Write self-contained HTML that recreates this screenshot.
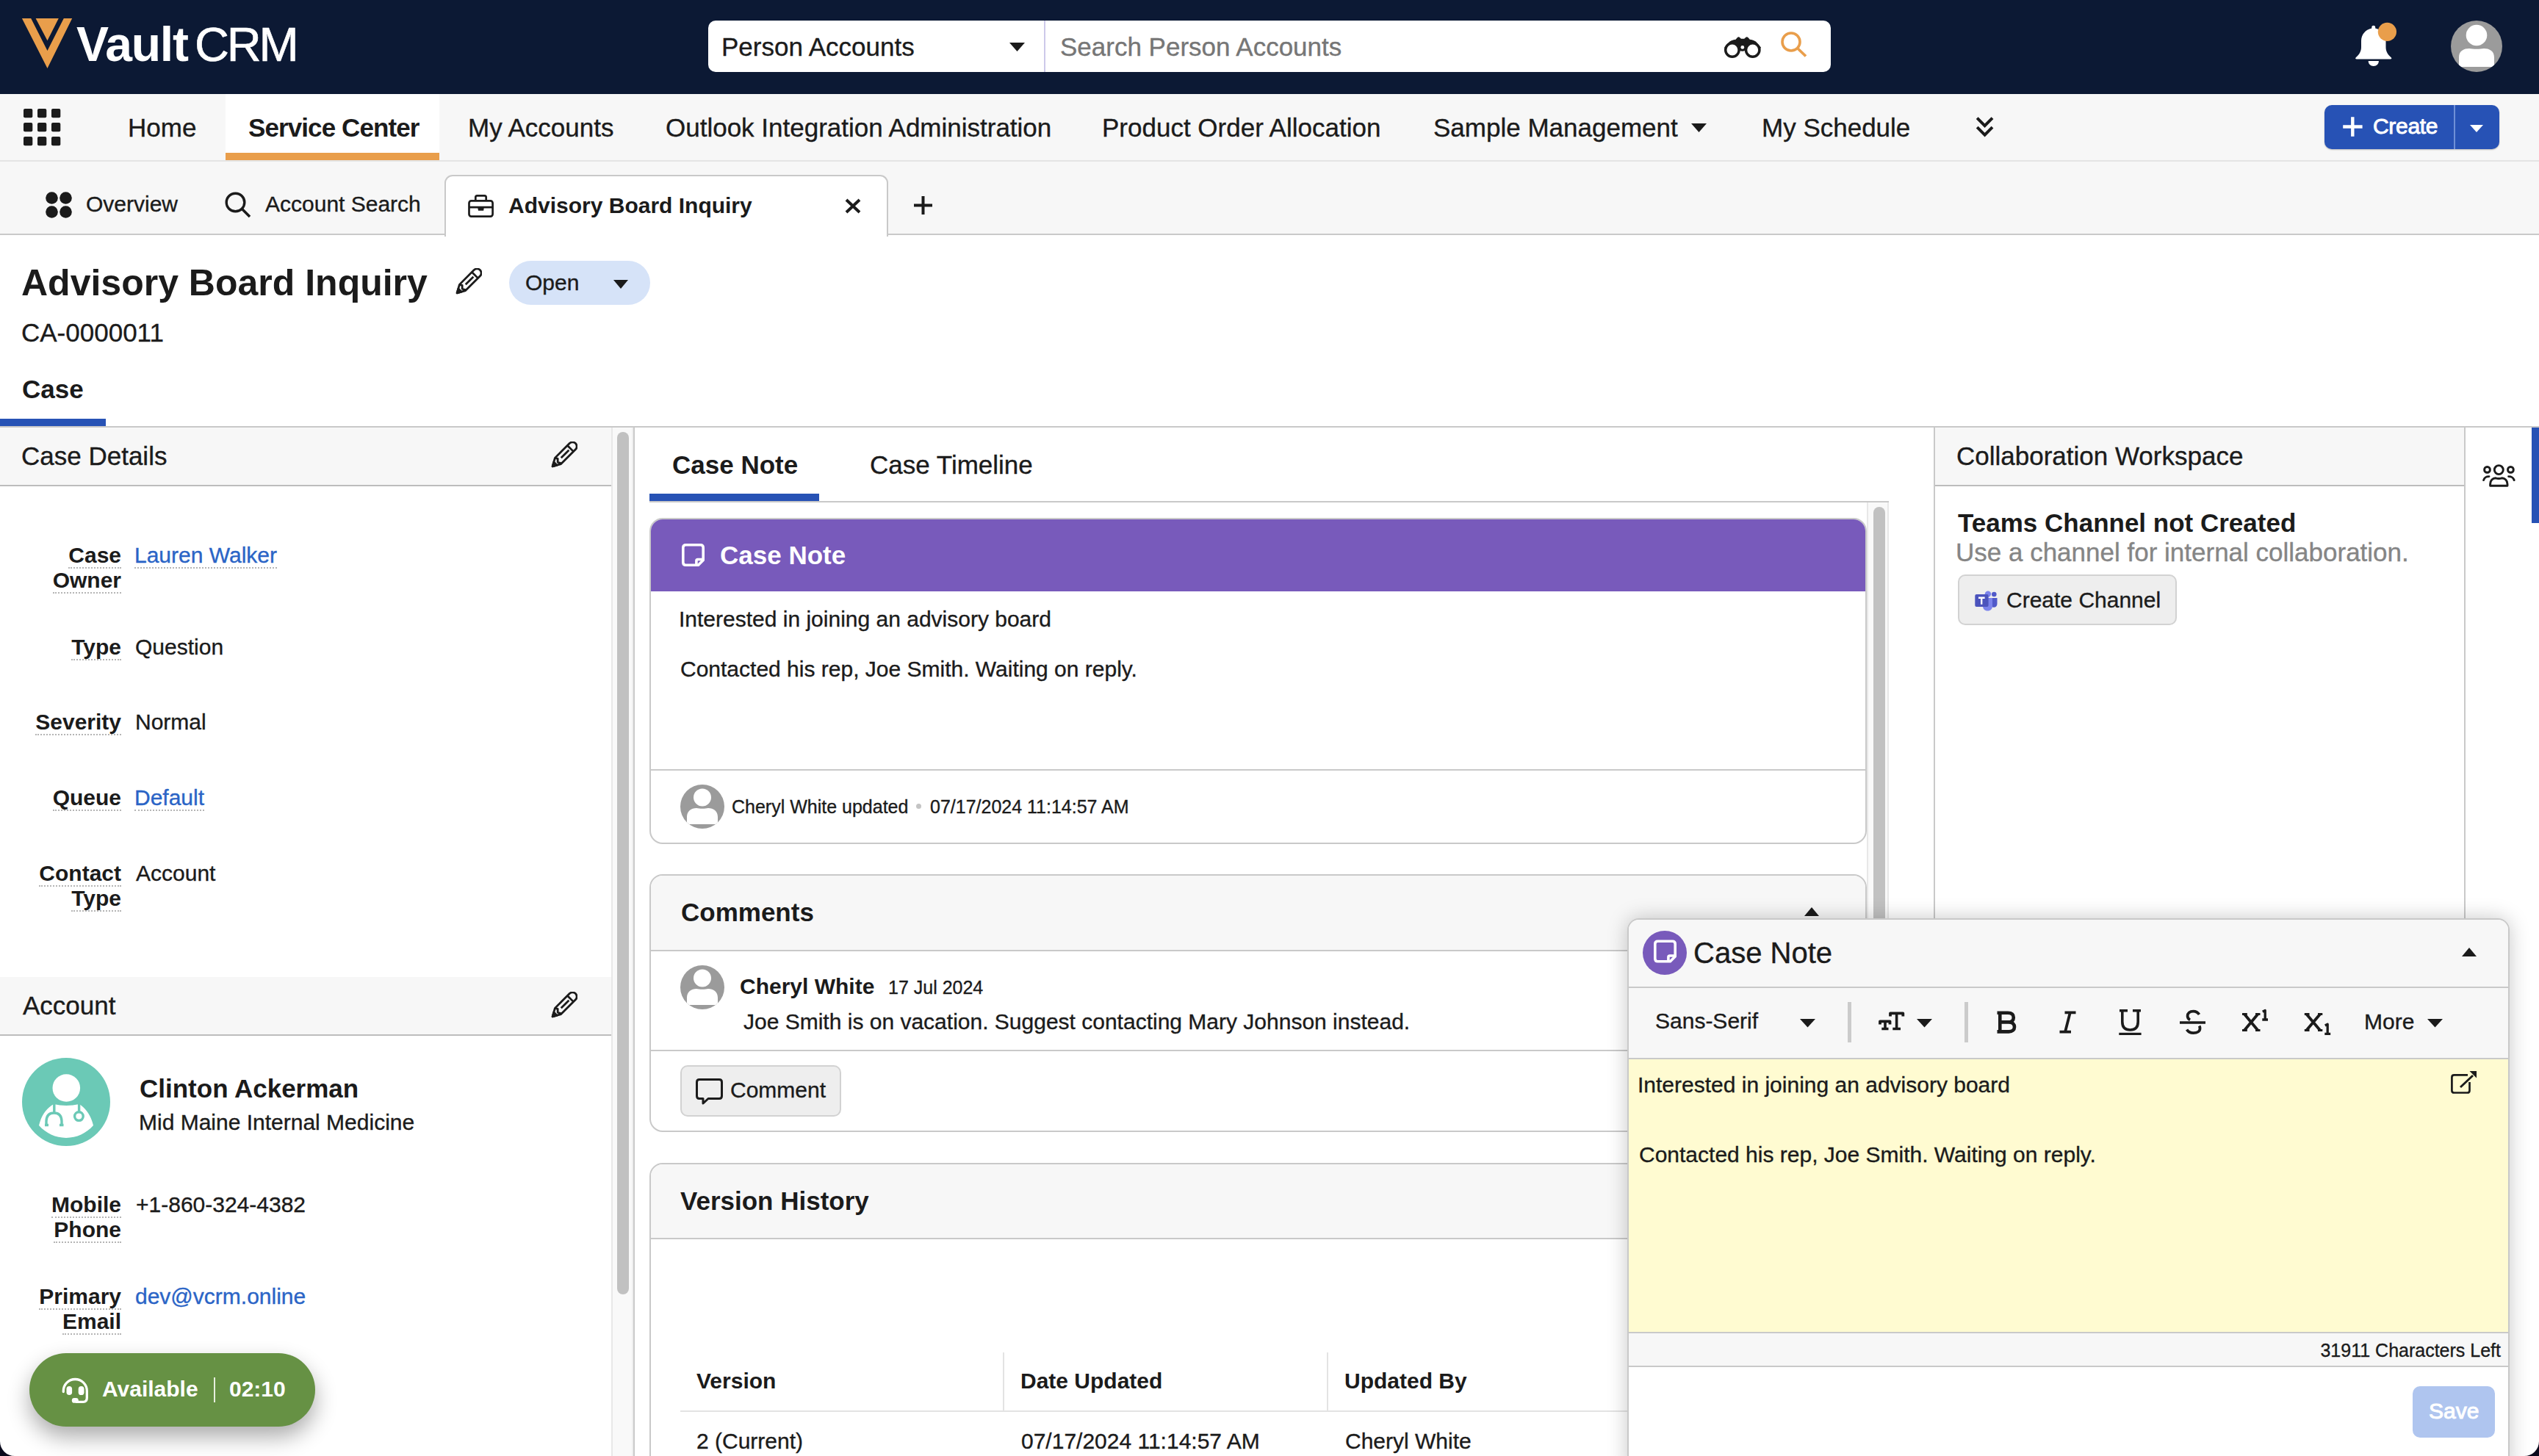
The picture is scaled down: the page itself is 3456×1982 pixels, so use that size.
<!DOCTYPE html>
<html><head><meta charset="utf-8">
<style>
html,body{margin:0;padding:0;}
body{width:3456px;height:1982px;position:relative;overflow:hidden;background:#fff;font-family:"Liberation Sans",sans-serif;color:#1b1b1b;}
.a{position:absolute;}
.t{position:absolute;white-space:nowrap;line-height:1;-webkit-text-stroke:0.35px currentColor;}
.f25{font-size:25px}.f30{font-size:30px}.f35{font-size:35px}.f40{font-size:40px}.f50{font-size:50px}
.b{font-weight:700}
.t.b,.t.lbl{-webkit-text-stroke:0}
.lnk{color:#2a64c6}
.lbl{font-weight:700;font-size:30px;text-align:right;right:auto;}
.dot{border-bottom:2px dotted #b5b5b5;}
svg{position:absolute;overflow:visible}
</style></head><body>

<svg width="0" height="0" style="position:absolute"><defs>
<symbol id="pen" viewBox="0 0 36 36"><g transform="translate(18,18) rotate(-45)" fill="none" stroke="#1b1b1b" stroke-width="2.8" stroke-linejoin="round"><path d="M-12 -5.8 L16 -5.8 A5.8 5.8 0 0 1 16 5.8 L-12 5.8 L-22.5 0 Z"/><path d="M12 -5.8 V5.8"/><path d="M-6 0 H9"/><path d="M-12 -5.8 L-10 -2.5 L-13.5 1 L-11 5.8"/><path d="M-22.5 0 L-17 -3 L-17 3 Z" fill="#1b1b1b"/></g></symbol>
<symbol id="person" viewBox="0 0 60 60"><clipPath id="pclip"><circle cx="30" cy="30" r="30"/></clipPath><circle cx="30" cy="30" r="30" fill="#9b9b9b"/><g clip-path="url(#pclip)"><circle cx="30" cy="17.5" r="12" fill="#fff"/><path d="M9 54 V44 C9 36 15 32 22 32 C26 33 34 33 38 32 C45 32 51 36 51 44 V54 Z" fill="#fff"/></g></symbol>
</defs></svg>
<!-- ============ HEADER ============ -->
<div class="a" style="left:0;top:0;width:3456px;height:128px;background:#0c1934"></div>
<svg style="left:0;top:0" width="120" height="128"><polygon fill="#e99e4b" points="29.9,24.9 42.2,24.9 64.5,69 86.8,24.9 98.2,24.9 64.5,92.9"/><polygon fill="#e99e4b" points="48.6,24.9 79.8,24.9 64.5,55.3"/></svg>
<div class="t b" style="left:104px;top:27px;font-size:66px;color:#fff;letter-spacing:-1.2px">Vault</div>
<div class="t" style="left:265px;top:28px;font-size:65px;color:#fff;letter-spacing:-3.2px;-webkit-text-stroke:0.6px #fff">CRM</div>

<div class="a" style="left:964px;top:28px;width:1528px;height:70px;background:#fff;border-radius:10px"></div>
<div class="a" style="left:1421px;top:28px;width:2px;height:70px;background:#cdc9ea"></div>
<div class="t f35" style="left:982px;top:46px;color:#1b1b1b">Person Accounts</div>
<svg style="left:1374px;top:58px" width="22" height="13"><polygon points="0,0 21,0 10.5,12" fill="#1b1b1b"/></svg>
<div class="t f35" style="left:1443px;top:46px;color:#767676">Search Person Accounts</div>
<!-- binoculars -->
<svg style="left:2340px;top:40px" width="65" height="45" viewBox="0 0 65 45"><path d="M7.8 25 L14.8 17 C17 15.2 20 14.4 23.2 14 L25.4 11.5 Q26.5 10.3 27.7 11.5 L29.8 13.4 H34.3 L36.5 11.5 Q37.7 10.3 38.9 11.5 L41.2 14 C44.4 14.4 47.3 15.2 49.5 17 L56.4 25 Z" fill="#1b1b1b" stroke="#1b1b1b" stroke-width="1.2" stroke-linejoin="round"/><path d="M27.6 13 H35.6 V28.5 Q31.6 31 27.6 28.5 Z" fill="#1b1b1b"/><circle cx="17.9" cy="28" r="9.2" fill="#fff" stroke="#1b1b1b" stroke-width="3.5"/><circle cx="45.7" cy="28" r="9.2" fill="#fff" stroke="#1b1b1b" stroke-width="3.5"/><circle cx="31.8" cy="24.4" r="2.4" fill="#fff"/></svg>
<!-- orange search -->
<svg style="left:2424px;top:43px" width="36" height="35" viewBox="0 0 36 35"><circle cx="14" cy="14" r="12" fill="none" stroke="#e99e4b" stroke-width="3.6"/><line x1="22.5" y1="22.5" x2="34" y2="33.5" stroke="#e99e4b" stroke-width="3.8"/></svg>
<!-- bell -->
<svg style="left:3204px;top:33px" width="60" height="60" viewBox="0 0 60 60"><path d="M24.3 4 C24.3 1 29.2 1 29.2 4 V5.5 C38 7.5 43.5 14 43.5 23 V31 C43.5 37 46 41 50.5 45 C52 46.5 51.5 47.5 49.5 47.5 H4 C2 47.5 1.5 46.5 3 45 C7.5 41 10 37 10 31 V23 C10 14 15.5 7.5 24.3 5.5 Z" fill="#fff"/><path d="M19.7 50 H33.9 C33.9 54 31 57 26.8 57 C22.6 57 19.7 54 19.7 50 Z" fill="#fff"/><circle cx="45.4" cy="10.3" r="12.6" fill="#e99e4b"/></svg>
<!-- avatar -->
<svg style="left:3336px;top:28px" width="70" height="70" viewBox="0 0 70 70"><defs><clipPath id="avc"><circle cx="35" cy="35" r="35"/></clipPath></defs><circle cx="35" cy="35" r="35" fill="#9b9b9b"/><g clip-path="url(#avc)"><circle cx="35" cy="20" r="14.3" fill="#fff"/><path d="M11 63 L11 50 C11 41 18 38 25 38 C30 39 40 39 45 38 C52 38 59 41 59 50 L59 63Z" fill="#fff"/></g></svg>

<!-- ============ NAV ============ -->
<div class="a" style="left:0;top:128px;width:3456px;height:90px;background:#f7f7f7"></div>
<div class="a" style="left:0;top:218px;width:3456px;height:2px;background:#e4e4e4"></div>
<svg style="left:32px;top:148px" width="51" height="51" viewBox="0 0 51 51"><g fill="#1b1b1b"><rect x="0" y="0" width="12.3" height="12.3" rx="2"/><rect x="19" y="0" width="12.3" height="12.3" rx="2"/><rect x="38" y="0" width="12.3" height="12.3" rx="2"/><rect x="0" y="19" width="12.3" height="12.3" rx="2"/><rect x="19" y="19" width="12.3" height="12.3" rx="2"/><rect x="38" y="19" width="12.3" height="12.3" rx="2"/><rect x="0" y="38" width="12.3" height="12.3" rx="2"/><rect x="19" y="38" width="12.3" height="12.3" rx="2"/><rect x="38" y="38" width="12.3" height="12.3" rx="2"/></g></svg>
<div class="t f35" style="left:174px;top:156px">Home</div>
<div class="a" style="left:307px;top:128px;width:291px;height:90px;background:#fff"></div>
<div class="a" style="left:307px;top:208px;width:291px;height:10px;background:#e99e4b"></div>
<div class="t f35 b" style="left:338px;top:156px;letter-spacing:-0.9px">Service Center</div>
<div class="t f35" style="left:637px;top:156px">My Accounts</div>
<div class="t f35" style="left:906px;top:156px">Outlook Integration Administration</div>
<div class="t f35" style="left:1500px;top:156px">Product Order Allocation</div>
<div class="t f35" style="left:1951px;top:156px">Sample Management</div>
<svg style="left:2302px;top:168px" width="22" height="13"><polygon points="0,0 21,0 10.5,12" fill="#1b1b1b"/></svg>
<div class="t f35" style="left:2398px;top:156px">My Schedule</div>
<svg style="left:2689px;top:159px" width="26" height="28" viewBox="0 0 26 28"><path d="M2.2 1.6 L12.6 12.1 L23 1.6 M2.2 14.2 L12.6 24.7 L23 14.2" fill="none" stroke="#1b1b1b" stroke-width="4" stroke-linecap="butt" stroke-linejoin="miter"/></svg>
<div class="a" style="left:3164px;top:143px;width:238px;height:60px;background:#2752b5;border-radius:10px;box-shadow:0 1px 2px rgba(0,0,0,.25)"></div>
<div class="a" style="left:3340px;top:143px;width:2px;height:60px;background:#6f8fd6"></div>
<svg style="left:3189px;top:159px" width="27" height="27" viewBox="0 0 27 27"><path d="M13.3 0.3 V26.7 M0.2 13.5 H26.6" stroke="#fff" stroke-width="4.4" stroke-linecap="butt"/></svg>
<div class="t f30" style="left:3230px;top:157px;color:#fff;letter-spacing:-0.3px;-webkit-text-stroke:0.9px #fff">Create</div>
<svg style="left:3362px;top:170px" width="19" height="11"><polygon points="0,0 18,0 9,10" fill="#fff"/></svg>

<!-- ============ TAB BAR ============ -->
<div class="a" style="left:0;top:220px;width:3456px;height:98px;background:#f7f7f7"></div>
<div class="a" style="left:0;top:318px;width:3456px;height:2px;background:#c9c9c9"></div>
<svg style="left:62px;top:261px" width="36" height="36" viewBox="0 0 36 36"><g fill="#1b1b1b"><circle cx="8.5" cy="8.5" r="8.3"/><circle cx="27.5" cy="8.5" r="8.3"/><circle cx="8.5" cy="27.5" r="8.3"/><circle cx="27.5" cy="27.5" r="8.3"/></g></svg>
<div class="t f30" style="left:117px;top:263px">Overview</div>
<svg style="left:306px;top:261px" width="36" height="36" viewBox="0 0 36 36"><circle cx="14.5" cy="14.5" r="12.3" fill="none" stroke="#1b1b1b" stroke-width="3.4"/><line x1="23.5" y1="23.5" x2="34" y2="34" stroke="#1b1b1b" stroke-width="3.6"/></svg>
<div class="t f30" style="left:361px;top:263px">Account Search</div>
<div class="a" style="left:605px;top:238px;width:600px;height:82px;background:#fff;border:2px solid #c9c9c9;border-bottom:none;border-radius:11px 11px 0 0"></div>
<svg style="left:625px;top:255px" width="60" height="50" viewBox="0 0 60 50"><g fill="none" stroke="#1b1b1b" stroke-width="2.7"><rect x="13.5" y="18.4" width="32.1" height="21.2" rx="3"/><path d="M22.3 18.4 V13.6 Q22.3 11.4 24.5 11.4 H34.5 Q36.7 11.4 36.7 13.6 V18.4"/><path d="M13.5 27.1 H45.6"/></g><path d="M25 26 H34 L33.2 31.7 H26 Z" fill="#1b1b1b"/></svg>
<div class="t f30 b" style="left:692px;top:265px">Advisory Board Inquiry</div>
<svg style="left:1150px;top:270px" width="22" height="21" viewBox="0 0 22 21"><path d="M2 2 L20 19 M20 2 L2 19" stroke="#1b1b1b" stroke-width="4"/></svg>
<svg style="left:1243px;top:266px" width="27" height="27" viewBox="0 0 27 27"><path d="M13.5 1 V26 M1 13.5 H26" stroke="#1b1b1b" stroke-width="4"/></svg>

<!-- ============ PAGE HEADER ============ -->
<div class="t f50 b" style="left:29px;top:360px">Advisory Board Inquiry</div>
<svg style="left:620px;top:365px" width="36" height="36" viewBox="0 0 36 36"><use href="#pen"/></svg>
<div class="a" style="left:693px;top:355px;width:192px;height:60px;background:#d6e3f8;border-radius:30px"></div>
<div class="t f30" style="left:715px;top:370px">Open</div>
<svg style="left:835px;top:381px" width="21" height="13"><polygon points="0,0 20,0 10,12" fill="#1b1b1b"/></svg>
<div class="t f35" style="left:29px;top:435px">CA-0000011</div>
<div class="t f35 b" style="left:30px;top:512px">Case</div>
<div class="a" style="left:0;top:570px;width:144px;height:10px;background:#2752b5"></div>
<div class="a" style="left:0;top:580px;width:3456px;height:2px;background:#c9c9c9"></div>

<!-- ============ LEFT PANEL ============ -->
<div class="a" style="left:0;top:582px;width:832px;height:78px;background:#f7f7f7"></div>
<div class="a" style="left:0;top:660px;width:832px;height:2px;background:#bdbdbd"></div>
<div class="a" style="left:832px;top:582px;width:2px;height:1400px;background:#e8e8e8"></div>
<div class="a" style="left:834px;top:582px;width:26px;height:1400px;background:#f9f9f9"></div>
<div class="a" style="left:860px;top:582px;width:2px;height:1400px;background:#efefef"></div>
<div class="a" style="left:862px;top:582px;width:2px;height:1400px;background:#c9c9c9"></div>
<div class="a" style="left:840px;top:588px;width:16px;height:1174px;background:#c1c1c1;border-radius:8px"></div>
<div class="t f35" style="left:29px;top:603px">Case Details</div>
<svg style="left:750px;top:601px" width="36" height="36" viewBox="0 0 36 36"><use href="#pen"/></svg>

<div class="t lbl" style="right:3291px;top:741px"><span class="dot">Case</span></div>
<div class="t lbl" style="right:3291px;top:775px"><span class="dot">Owner</span></div>
<div class="t f30 lnk" style="left:183px;top:741px"><span class="dot">Lauren Walker</span></div>
<div class="t lbl" style="right:3291px;top:866px"><span class="dot">Type</span></div>
<div class="t f30" style="left:184px;top:866px">Question</div>
<div class="t lbl" style="right:3291px;top:968px"><span class="dot">Severity</span></div>
<div class="t f30" style="left:184px;top:968px">Normal</div>
<div class="t lbl" style="right:3291px;top:1071px"><span class="dot">Queue</span></div>
<div class="t f30 lnk" style="left:183px;top:1071px"><span class="dot">Default</span></div>
<div class="t lbl" style="right:3291px;top:1174px"><span class="dot">Contact</span></div>
<div class="t lbl" style="right:3291px;top:1208px"><span class="dot">Type</span></div>
<div class="t f30" style="left:185px;top:1174px">Account</div>

<div class="a" style="left:0;top:1330px;width:832px;height:78px;background:#f7f7f7"></div>
<div class="a" style="left:0;top:1408px;width:832px;height:2px;background:#bdbdbd"></div>
<div class="t f35" style="left:31px;top:1351px">Account</div>
<svg style="left:750px;top:1350px" width="36" height="36" viewBox="0 0 36 36"><use href="#pen"/></svg>

<svg style="left:30px;top:1440px" width="120" height="120" viewBox="0 0 120 120"><circle cx="60" cy="60" r="60" fill="#6bc9b6"/><circle cx="60.3" cy="41" r="18.8" fill="#fff"/><path d="M23 92 C26 79 33 69 43 63 Q60 67 78 63 C87 69 94 79 97 92 A49 49 0 0 1 23 92 Z" fill="#fff"/><path d="M43.8 62 V75 M33 91.5 V87 C33 79 37 75 43.5 75 C50 75 54 79 54 87 V91.5 M31 91.5 H36 M51 91.5 H56.5 M77.6 62 V73" fill="none" stroke="#6bc9b6" stroke-width="3.4"/><circle cx="77.4" cy="79.6" r="5.8" fill="#fff" stroke="#6bc9b6" stroke-width="3.4"/></svg>
<div class="t f35 b" style="left:190px;top:1464px">Clinton Ackerman</div>
<div class="t f30" style="left:189px;top:1513px">Mid Maine Internal Medicine</div>
<div class="t lbl" style="right:3291px;top:1625px"><span class="dot">Mobile</span></div>
<div class="t lbl" style="right:3291px;top:1659px"><span class="dot">Phone</span></div>
<div class="t f30" style="left:185px;top:1625px">+1-860-324-4382</div>
<div class="t lbl" style="right:3291px;top:1750px"><span class="dot">Primary</span></div>
<div class="t lbl" style="right:3291px;top:1784px"><span class="dot">Email</span></div>
<div class="t f30 lnk" style="left:184px;top:1750px">dev@vcrm.online</div>

<div class="a" style="left:40px;top:1842px;width:389px;height:100px;background:#669144;border-radius:50px;box-shadow:0 14px 30px rgba(0,0,0,.33)"></div>
<svg style="left:75px;top:1865px" width="60" height="55" viewBox="75 1865 60 55"><path d="M86.3 1894.5 V1893.5 A16 16 0 0 1 118.3 1893.5 V1903 C118.3 1906.2 116.5 1908.3 113.3 1908.3 H104" fill="none" stroke="#fff" stroke-width="3.3" stroke-linecap="round"/><rect x="97.8" y="1903" width="9" height="6.8" rx="3.4" fill="#fff"/><rect x="90.5" y="1886.9" width="7.6" height="12.2" rx="3.8" fill="#fff"/><rect x="106.7" y="1886.9" width="7.8" height="12.2" rx="3.9" fill="#fff"/></svg>
<div class="t f30 b" style="left:139px;top:1876px;color:#fff">Available</div>
<div class="a" style="left:291px;top:1875px;width:2px;height:34px;background:#e6eede"></div>
<div class="t f30 b" style="left:312px;top:1876px;color:#fff">02:10</div>
<svg style="left:0;top:1952px" width="30" height="30" viewBox="0 0 30 30"><path d="M0 10 A20 20 0 0 0 20 30 L0 30Z" fill="#0a0a1c"/></svg>

<!-- ============ MIDDLE ============ -->
<div class="t f35 b" style="left:915px;top:615px">Case Note</div>
<div class="t f35" style="left:1184px;top:615px">Case Timeline</div>
<div class="a" style="left:884px;top:672px;width:231px;height:10px;background:#2752b5"></div>
<div class="a" style="left:884px;top:682px;width:1687px;height:2px;background:#c9c9c9"></div>
<!-- middle scrollbar -->
<div class="a" style="left:2541px;top:684px;width:2px;height:1300px;background:#e8e8e8"></div>
<div class="a" style="left:2543px;top:684px;width:26px;height:1300px;background:#f9f9f9"></div>
<div class="a" style="left:2569px;top:684px;width:2px;height:1300px;background:#e8e8e8"></div>
<div class="a" style="left:2550px;top:690px;width:16px;height:1300px;background:#c1c1c1;border-radius:8px"></div>

<!-- card 1 -->
<div class="a" style="left:884px;top:705px;width:1653px;height:440px;border:2px solid #c9c9c9;border-radius:18px;overflow:hidden;background:#fff">
  <div class="a" style="left:0;top:0;width:1653px;height:98px;background:#785abb"></div>
  <div class="a" style="left:0;top:340px;width:1653px;height:2px;background:#c9c9c9"></div>
</div>
<svg style="left:928px;top:740px" width="31" height="31" viewBox="0 0 31 31"><path d="M1.8 5.5 Q1.8 1.8 5.5 1.8 H25.5 Q29.2 1.8 29.2 5.5 V22.5 L22.5 29.2 H5.5 Q1.8 29.2 1.8 25.5 Z M29.2 21.5 H21.8 Q19.9 21.5 19.9 23.4 V29.2" fill="none" stroke="#fff" stroke-width="3.6" stroke-linejoin="round"/></svg>
<div class="t f35 b" style="left:980px;top:738px;color:#fff">Case Note</div>
<div class="t f30" style="left:924px;top:828px">Interested in joining an advisory board</div>
<div class="t f30" style="left:926px;top:896px">Contacted his rep, Joe Smith. Waiting on reply.</div>
<svg style="left:926px;top:1068px" width="60" height="60" viewBox="0 0 60 60"><use href="#person"/></svg>
<div class="t f25" style="left:996px;top:1086px">Cheryl White updated</div>
<div class="a" style="left:1247px;top:1094px;width:7px;height:7px;border-radius:50%;background:#c4c4c4"></div>
<div class="t f25" style="left:1266px;top:1086px">07/17/2024 11:14:57 AM</div>

<!-- card 2 comments -->
<div class="a" style="left:884px;top:1190px;width:1653px;height:347px;border:2px solid #c9c9c9;border-radius:18px;overflow:hidden;background:#fff">
  <div class="a" style="left:0;top:0;width:1653px;height:101px;background:#f7f7f7"></div>
  <div class="a" style="left:0;top:101px;width:1653px;height:2px;background:#c9c9c9"></div>
  <div class="a" style="left:0;top:237px;width:1653px;height:2px;background:#c9c9c9"></div>
</div>
<div class="t f35 b" style="left:927px;top:1224px">Comments</div>
<svg style="left:2456px;top:1235px" width="21" height="13"><polygon points="0,12 20,12 10,0" fill="#1b1b1b"/></svg>
<svg style="left:926px;top:1314px" width="60" height="60" viewBox="0 0 60 60"><use href="#person"/></svg>
<div class="t f30 b" style="left:1007px;top:1328px">Cheryl White</div>
<div class="t f25" style="left:1209px;top:1332px">17 Jul 2024</div>
<div class="t f30" style="left:1012px;top:1376px">Joe Smith is on vacation. Suggest contacting Mary Johnson instead.</div>
<div class="a" style="left:926px;top:1450px;width:215px;height:66px;background:#eeeeee;border:2px solid #d2d2d2;border-radius:10px"></div>
<svg style="left:947px;top:1467px" width="38" height="38" viewBox="0 0 38 38"><path d="M5 2.5 H32 Q35.5 2.5 35.5 6 V25 Q35.5 28.5 32 28.5 H17 L10 35 V28.5 H5 Q1.5 28.5 1.5 25 V6 Q1.5 2.5 5 2.5 Z" fill="none" stroke="#1b1b1b" stroke-width="3" stroke-linejoin="round"/></svg>
<div class="t f30" style="left:994px;top:1469px">Comment</div>

<!-- card 3 version history -->
<div class="a" style="left:884px;top:1583px;width:1653px;height:500px;border:2px solid #c9c9c9;border-radius:18px;overflow:hidden;background:#fff">
  <div class="a" style="left:0;top:0;width:1653px;height:100px;background:#f7f7f7"></div>
  <div class="a" style="left:0;top:100px;width:1653px;height:2px;background:#c9c9c9"></div>
</div>
<div class="t f35 b" style="left:926px;top:1617px">Version History</div>
<div class="a" style="left:1365px;top:1841px;width:2px;height:80px;background:#e3e3e3"></div>
<div class="a" style="left:1806px;top:1841px;width:2px;height:80px;background:#e3e3e3"></div>
<div class="a" style="left:926px;top:1920px;width:1611px;height:2px;background:#e3e3e3"></div>
<div class="t f30 b" style="left:948px;top:1865px">Version</div>
<div class="t f30 b" style="left:1389px;top:1865px">Date Updated</div>
<div class="t f30 b" style="left:1830px;top:1865px">Updated By</div>
<div class="t f30" style="left:948px;top:1947px">2 (Current)</div>
<div class="t f30" style="left:1390px;top:1947px">07/17/2024 11:14:57 AM</div>
<div class="t f30" style="left:1831px;top:1947px">Cheryl White</div>

<!-- ============ RIGHT PANEL ============ -->
<div class="a" style="left:2632px;top:582px;width:2px;height:1400px;background:#c9c9c9"></div>
<div class="a" style="left:2634px;top:582px;width:720px;height:78px;background:#f7f7f7"></div>
<div class="a" style="left:2634px;top:660px;width:720px;height:2px;background:#bdbdbd"></div>
<div class="a" style="left:3354px;top:582px;width:2px;height:1400px;background:#c9c9c9"></div>
<div class="t f35" style="left:2663px;top:603px">Collaboration Workspace</div>
<div class="t f35 b" style="left:2665px;top:694px">Teams Channel not Created</div>
<div class="t f35" style="left:2662px;top:734px;color:#858585">Use a channel for internal collaboration.</div>
<div class="a" style="left:2665px;top:782px;width:294px;height:65px;background:#eeeeee;border:2px solid #d2d2d2;border-radius:10px"></div>
<svg style="left:2680px;top:795px" width="50" height="45" viewBox="2680 795 50 45"><circle cx="2706" cy="808.6" r="4.2" fill="#7b83eb"/><path d="M2699 814 H2712 V825 C2712 829 2709.5 831.5 2705.5 831.5 C2701.5 831.5 2699 829 2699 825 Z" fill="#7b83eb"/><circle cx="2714.3" cy="809" r="3.3" fill="#5059c9"/><path d="M2712 814 H2718.5 V822 C2718.5 825 2716.5 826.8 2714 826.8 C2713 826.8 2712.5 826.5 2712 826.2 Z" fill="#5059c9"/><rect x="2688.3" y="808.9" width="18.3" height="17" rx="2" fill="#4b53bc"/><path d="M2693 812.6 H2701.6 V814.9 H2698.4 V822.8 H2696 V814.9 H2693 Z" fill="#fff"/></svg>
<div class="t f30" style="left:2731px;top:802px">Create Channel</div>
<svg style="left:3370px;top:620px" width="65" height="55" viewBox="3370 620 65 55"><g fill="none" stroke="#1b1b1b" stroke-width="2.9" stroke-linecap="round"><circle cx="3401.3" cy="639.6" r="6"/><circle cx="3385.5" cy="639.4" r="3.9"/><circle cx="3417.4" cy="639.4" r="3.9"/><path d="M3389.6 661.3 V659 C3389.6 654 3393 650.8 3397 650.8 C3399 651.5 3403.5 651.5 3405.5 650.8 C3409.5 650.8 3413 654 3413 659 V661.3 Z" stroke-linejoin="round"/><path d="M3380.6 653.6 C3382 649.5 3384 648.6 3388 648.6"/><path d="M3414.6 648.6 C3418.6 648.6 3420.6 649.5 3422.2 653.6"/></g></svg>
<div class="a" style="left:3446px;top:582px;width:10px;height:130px;background:#2752b5"></div>

<!-- ============ FLOATING CASE NOTE ============ -->
<div class="a" style="left:2215px;top:1250px;width:1197px;height:760px;background:#fff;border:2px solid #c9c9c9;border-radius:16px;box-shadow:0 0 28px rgba(0,0,0,.22);overflow:hidden">
  <div class="a" style="left:0;top:0;width:1197px;height:91px;background:#f7f7f7"></div>
  <div class="a" style="left:0;top:91px;width:1197px;height:2px;background:#c9c9c9"></div>
  <div class="a" style="left:0;top:93px;width:1197px;height:95px;background:#f7f7f7"></div>
  <div class="a" style="left:0;top:188px;width:1197px;height:2px;background:#c9c9c9"></div>
  <div class="a" style="left:0;top:190px;width:1197px;height:371px;background:#fffbd1"></div>
  <div class="a" style="left:0;top:561px;width:1197px;height:2px;background:#c9c9c9"></div>
  <div class="a" style="left:0;top:563px;width:1197px;height:44px;background:#f7f7f7"></div>
  <div class="a" style="left:0;top:607px;width:1197px;height:2px;background:#c9c9c9"></div>
</div>
<svg style="left:2236px;top:1267px" width="60" height="60" viewBox="0 0 60 60"><circle cx="30" cy="30" r="30" fill="#785abb"/><path d="M16.8 18 Q16.8 14.3 20.5 14.3 H40.5 Q44.2 14.3 44.2 18 V35 L37.5 41.7 H20.5 Q16.8 41.7 16.8 38 Z M44.2 34 H36.8 Q34.9 34 34.9 35.9 V41.7" fill="none" stroke="#fff" stroke-width="3.6" stroke-linejoin="round"/></svg>
<div class="t f40" style="left:2305px;top:1277px">Case Note</div>
<svg style="left:3351px;top:1290px" width="21" height="13"><polygon points="0,12 20,12 10,0" fill="#1b1b1b"/></svg>

<div class="t f30" style="left:2253px;top:1375px">Sans-Serif</div>
<svg style="left:2450px;top:1387px" width="22" height="13"><polygon points="0,0 21,0 10.5,11.5" fill="#1b1b1b"/></svg>
<div class="a" style="left:2515px;top:1364px;width:5px;height:55px;background:#cbcbcb"></div>
<svg style="left:2609px;top:1387px" width="22" height="13"><polygon points="0,0 21,0 10.5,11.5" fill="#1b1b1b"/></svg>
<div class="a" style="left:2674px;top:1364px;width:5px;height:55px;background:#cbcbcb"></div>
<svg style="left:2540px;top:1360px" width="660" height="60" viewBox="2540 1360 660 60"><g fill="none" stroke="#1b1b1b" stroke-width="3.6" stroke-linecap="butt" stroke-linejoin="round">
<path d="M2559 1394.5 V1390.3 H2572.5 V1394.5" stroke-width="3.8"/><path d="M2566 1390.3 V1400.5 M2561.3 1400.5 H2570.5"/>
<path d="M2573 1383.5 V1379.3 H2590.3 V1383.5" stroke-width="3.8"/><path d="M2581.6 1379.3 V1400.5 M2576.3 1400.5 H2587"/>
<path d="M2718.5 1378.8 H2733 C2738.8 1378.8 2740.8 1381.8 2740.8 1385.2 C2740.8 1388.8 2738.3 1391.4 2733.3 1391.4 H2722.3 M2722.3 1378.8 V1404.4 M2722.3 1391.4 H2734 C2739.8 1391.4 2742 1394.6 2742 1398 C2742 1401.8 2739.3 1404.4 2734.3 1404.4 H2718.5" stroke-width="4.6"/>
<path d="M2810.5 1378.3 H2825.5 M2803.5 1404.7 H2819 M2817.8 1378.3 L2811 1404.7" stroke-width="3.8"/>
<path d="M2885 1375.8 H2896 M2903 1375.8 H2914 M2888.8 1375.8 V1391 C2888.8 1398.5 2892.8 1402 2899.5 1402 C2906.2 1402 2910.2 1398.5 2910.2 1391 V1375.8"/>
<path d="M2884.3 1407.4 H2914.6" stroke-width="3.2"/>
<path d="M2967 1392 H3002" stroke-width="3.4"/>
<path d="M2993.5 1381 C2991.5 1378 2988.8 1376.6 2985.5 1376.6 C2980.5 1376.6 2977.6 1379.5 2977.6 1383 C2977.6 1385.8 2979 1387.4 2981 1388.4 M2993.6 1396.5 C2994.2 1397.5 2994.5 1398.8 2994.5 1400 C2994.5 1403.7 2991 1406.2 2985.5 1406.2 C2981.3 1406.2 2978.3 1404.3 2976.6 1401.5" stroke-width="3.8"/>
<path d="M3055 1380.5 L3073.3 1402.5 M3073.3 1380.5 L3055 1402.5" stroke-width="3.9"/><path d="M3052 1380.5 H3058.8 M3070 1380.5 H3076.5 M3052 1402.5 H3058.8 M3070 1402.5 H3076.5" stroke-width="3.2"/>
<path d="M3079.8 1377.3 L3083.2 1375.5 V1388 M3079.3 1388 H3087" stroke-width="3.3"/>
<path d="M3139.5 1380.5 L3158 1402.5 M3158 1380.5 L3139.5 1402.5" stroke-width="3.9"/><path d="M3136.8 1380.5 H3143.5 M3155 1380.5 H3161.3 M3136.8 1402.5 H3143.5 M3155 1402.5 H3161.3" stroke-width="3.2"/>
<path d="M3164.8 1396 L3168.2 1394.2 V1407.3 M3164.3 1407.3 H3172.2" stroke-width="3.3"/>
</g></svg>
<div class="t f30" style="left:3218px;top:1376px">More</div>
<svg style="left:3304px;top:1387px" width="22" height="13"><polygon points="0,0 21,0 10.5,11.5" fill="#1b1b1b"/></svg>

<div class="t f30" style="left:2229px;top:1462px">Interested in joining an advisory board</div>
<div class="t f30" style="left:2231px;top:1557px">Contacted his rep, Joe Smith. Waiting on reply.</div>
<svg style="left:3320px;top:1445px" width="65" height="55" viewBox="3320 1445 65 55"><path d="M3359 1463.3 H3340.5 Q3337.4 1463.3 3337.4 1466.4 V1484.4 Q3337.4 1487.5 3340.5 1487.5 H3358.4 Q3361.5 1487.5 3361.5 1484.4 V1473" fill="none" stroke="#1b1b1b" stroke-width="2.7"/><path d="M3349 1480 L3366 1464" stroke="#1b1b1b" stroke-width="2.9"/><polygon points="3361.5,1458 3371,1458 3371,1467.5" fill="#1b1b1b"/></svg>
<div class="t f25" style="right:52px;top:1826px">31911 Characters Left</div>
<div class="a" style="left:3284px;top:1887px;width:112px;height:70px;background:#afc5ef;border-radius:10px"></div>
<div class="t f30" style="left:3306px;top:1906px;color:#fff;-webkit-text-stroke:1px #fff">Save</div>
<svg style="left:3426px;top:1952px" width="30" height="30" viewBox="0 0 30 30"><path d="M30 10 A20 20 0 0 1 10 30 L30 30Z" fill="#0a0a1c"/></svg>

</body></html>
